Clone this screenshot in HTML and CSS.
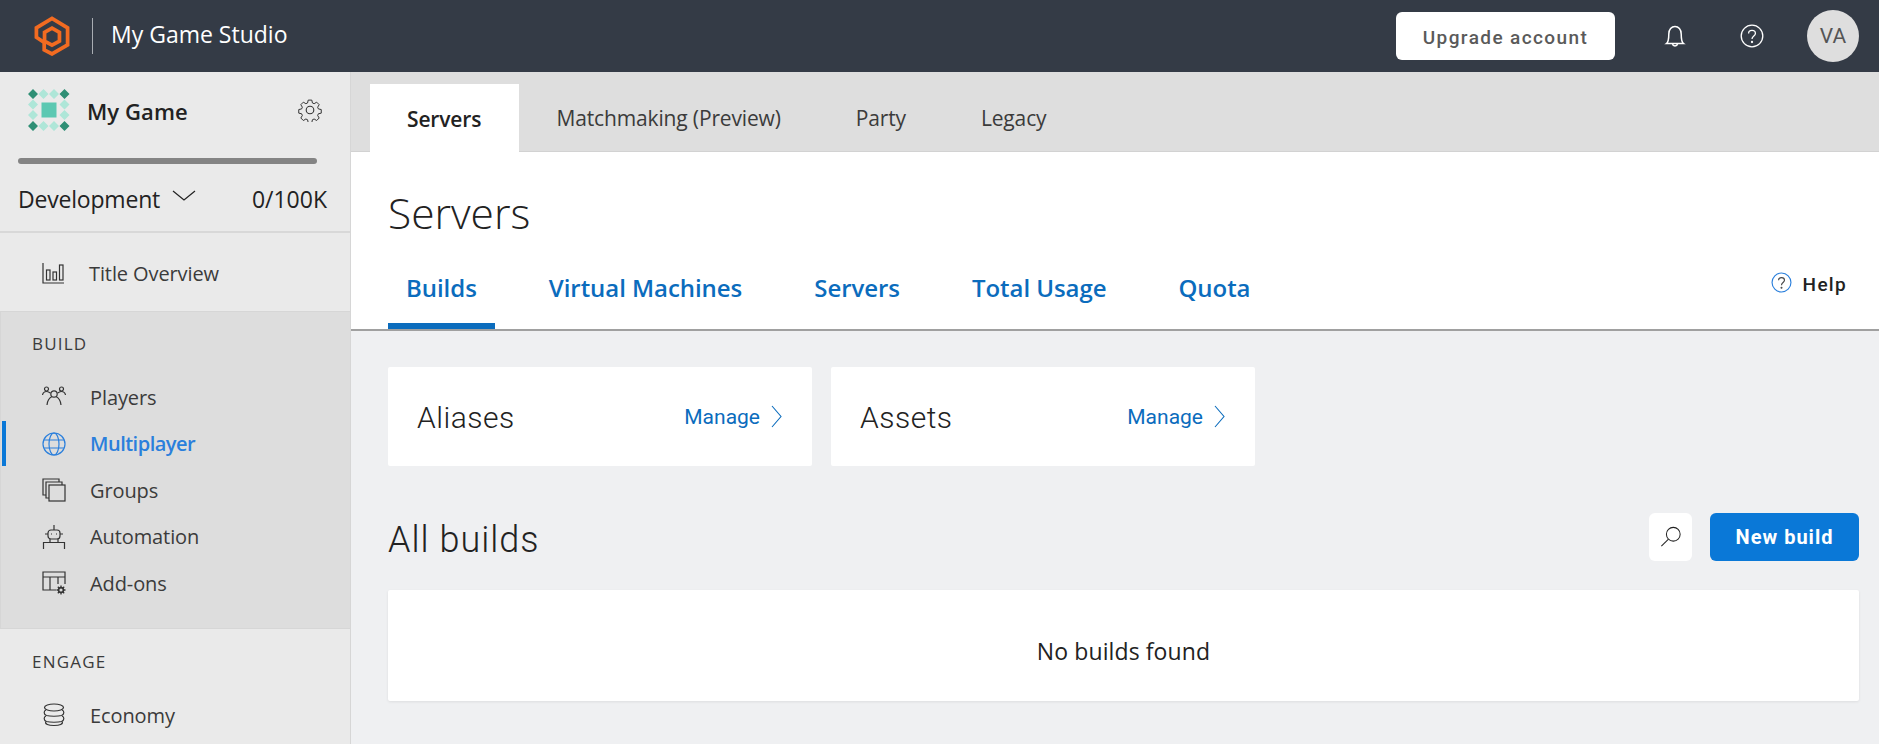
FILE: index.html
```html
<!DOCTYPE html>
<html lang="en">
<head>
    <meta charset="UTF-8">
    <meta name="viewport" content="width=device-width, initial-scale=1.0">
    <title>Servers</title>
    <link rel="stylesheet" href="styles.css">
</head>
<body>
    <header class="topbar">
        <svg class="logo" viewBox="73 50 106 118" fill="none" stroke="#f26b21" stroke-width="11" stroke-linejoin="miter">
            <path d="M103 150 L103 128 L80 113 L80 85 L126 57 L172 85 L172 135 L126 162 Z"/>
            <path d="M126 86 L148 98 L148 124 L126 136 L104 124 L104 98 Z"/>
        </svg>
        <span class="studio">My Game Studio</span>
        <div class="topbar-right">
            <button class="upgrade">Upgrade account</button>
            <svg class="top-icon bell" viewBox="0 0 24 24" fill="none" stroke="#fff" stroke-width="1.5">
                <path d="M3.5 19.5 C5.5 18 5.8 15.5 5.8 10 C5.8 5.5 8.5 2.5 12 2.5 C15.5 2.5 18.2 5.5 18.2 10 C18.2 15.5 18.5 18 20.5 19.5 Z"/>
                <path d="M9.5 20 C10 22.5 14 22.5 14.5 20"/>
            </svg>
            <svg class="top-icon help-top" viewBox="0 0 24 24" fill="none" stroke="#fff" stroke-width="1.3">
                <circle cx="12" cy="12" r="10.8"/>
                <path d="M8.6 9.4 C8.6 5.4 15.4 5.4 15.4 9.4 C15.4 12 12 12 12 15"/>
                <circle cx="12" cy="18" r="0.5"/>
            </svg>
            <div class="avatar">VA</div>
        </div>
    </header>

    <div class="layout">
        <aside class="sidebar">
            <div class="game">
                <svg class="game-icon" viewBox="0 0 42 42">
                    <path fill="#aee6d8" d="M15.5 0 l5 5 l-5 5 l-5 -5Z M26 0 l5 5 l-5 5 l-5 -5Z M5 10.5 l5 5 l-5 5 l-5 -5Z M5 21 l5 5 l-5 5 l-5 -5Z M36.5 10.5 l5 5 l-5 5 l-5 -5Z M36.5 21 l5 5 l-5 5 l-5 -5Z M15.5 32 l5 5 l-5 5 l-5 -5Z M26 32 l5 5 l-5 5 l-5 -5Z"/>
                    <path fill="#2f8f75" d="M5 0 l5 5 l-5 5 l-5 -5Z M36.5 0 l5 5 l-5 5 l-5 -5Z M5 32 l5 5 l-5 5 l-5 -5Z M36.5 32 l5 5 l-5 5 l-5 -5Z"/>
                    <rect fill="#5bc8b2" x="13.5" y="13.5" width="15" height="15"/>
                </svg>
                <span class="game-name">My Game</span>
                <svg class="gear" viewBox="0 0 24 24" fill="none" stroke="#333" stroke-width="1.1">
                    <circle cx="12" cy="12" r="3.8"/>
                    <path d="M10 1 h4 l.7 3.2 l1.9 .8 l2.8 -1.7 l2.8 2.8 l-1.7 2.8 l.8 1.9 l3.2 .7 v4 l-3.2 .7 l-.8 1.9 l1.7 2.8 l-2.8 2.8 l-2.8 -1.7 l-1.9 .8 l-.7 3.2 h-4 l-.7 -3.2 l-1.9 -.8 l-2.8 1.7 l-2.8 -2.8 l1.7 -2.8 l-.8 -1.9 l-3.2 -.7 v-4 l3.2 -.7 l.8 -1.9 l-1.7 -2.8 l2.8 -2.8 l2.8 1.7 l1.9 -.8Z" transform="translate(1.2 1.2) scale(.9)"/>
                </svg>
            </div>
            <div class="game-bar"></div>
            <div class="env">
                <span class="env-name">Development</span>
                <svg class="env-chevron" viewBox="0 0 24 11" fill="none" stroke="#222" stroke-width="1.2"><path d="M1 1 L12 10 L23 1"/></svg>
                <span class="env-count">0/100K</span>
            </div>

            <a class="nav-item overview">
                <svg class="nav-icon" viewBox="0 0 24 24" fill="none" stroke="#333" stroke-width="1.2">
                    <path d="M2 2 V22 H23"/>
                    <rect x="5.5" y="9" width="3.5" height="10"/>
                    <rect x="12" y="11" width="3.5" height="8"/>
                    <rect x="18.5" y="4" width="3.5" height="15"/>
                </svg>
                Title Overview
            </a>

            <section class="nav-group">
                <h2 class="nav-title">BUILD</h2>
                <a class="nav-item">
                    <svg class="nav-icon" viewBox="0 0 24 24" fill="none" stroke="#333" stroke-width="1.2">
                        <circle cx="12" cy="9" r="3.2"/>
                        <circle cx="4.5" cy="4" r="2"/>
                        <circle cx="19.5" cy="4" r="2"/>
                        <path d="M5 20 C5.5 14.5 8 12.5 10 11.5 M19 20 C18.5 14.5 16 12.5 14 11.5 M.5 10 C1 7.5 3 6.5 4.5 6.5 C6 6.5 7.5 7.5 8.5 8 M23.5 10 C23 7.5 21 6.5 19.5 6.5 C18 6.5 16.5 7.5 15.5 8"/>
                    </svg>
                    Players
                </a>
                <a class="nav-item active">
                    <svg class="nav-icon" viewBox="0 0 24 24" fill="none" stroke="#2a7fdc" stroke-width="1.2">
                        <circle cx="12" cy="12" r="11"/>
                        <ellipse cx="12" cy="12" rx="5" ry="11"/>
                        <path d="M2 8 H22 M2 16 H22"/>
                    </svg>
                    Multiplayer
                </a>
                <a class="nav-item">
                    <svg class="nav-icon" viewBox="0 0 24 24" fill="none" stroke="#333" stroke-width="1.2">
                        <path d="M4 17 H1 V1 H17 V4"/>
                        <path d="M7 20 H4 V4 H20 V7"/>
                        <rect x="7" y="7" width="16" height="16"/>
                    </svg>
                    Groups
                </a>
                <a class="nav-item">
                    <svg class="nav-icon" viewBox="0 0 24 24" fill="none" stroke="#333" stroke-width="1.2">
                        <path d="M12 0 V5"/>
                        <rect x="6" y="5" width="12" height="9" rx="3"/>
                        <path d="M3 9 H6 M18 9 H21 M1.5 24 V17.5 H22.5 V24 M8 14 V17.5 M16 14 V17.5"/>
                        <path d="M9 9 h1 M14 9 h1"/>
                    </svg>
                    Automation
                </a>
                <a class="nav-item">
                    <svg class="nav-icon" viewBox="0 0 24 24" fill="none" stroke="#333" stroke-width="1.2">
                        <path d="M14 19 H1 V1 H23 V13"/>
                        <path d="M1 6 H23 M8 6 V19 M16 6 V13"/>
                        <circle cx="19" cy="19" r="2.4" stroke-width="1.6"/>
                        <path d="M19 14.5 V16 M19 22 V23.5 M14.5 19 H16 M22 19 H23.5 M15.8 15.8 L17 17 M21 21 L22.2 22.2 M22.2 15.8 L21 17 M17 21 L15.8 22.2" stroke-width="1.3"/>
                    </svg>
                    Add-ons
                </a>
            </section>

            <section class="nav-group plain">
                <h2 class="nav-title">ENGAGE</h2>
                <a class="nav-item">
                    <svg class="nav-icon" viewBox="0 0 24 24" fill="none" stroke="#333" stroke-width="1.2">
                        <ellipse cx="12" cy="4.5" rx="9.5" ry="3.5"/>
                        <path d="M4 7 C1.5 8 1.5 11.5 4.5 12.5 C8 13.5 16 13.5 19.5 12.5 C22.5 11.5 22.5 8 20 7"/>
                        <path d="M4 13 C1.5 14 1.5 17.5 4.5 18.5 C8 19.5 16 19.5 19.5 18.5 C22.5 17.5 22.5 14 20 13"/>
                        <path d="M3.5 18.5 C3 21 6 22.5 12 22.5 C18 22.5 21 21 20.5 18.5"/>
                    </svg>
                    Economy
                </a>
            </section>
        </aside>

        <main class="main">
            <nav class="tabs">
                <a class="tab selected">Servers</a>
                <a class="tab">Matchmaking (Preview)</a>
                <a class="tab">Party</a>
                <a class="tab">Legacy</a>
            </nav>

            <div class="page-head">
                <h1 class="page-title">Servers</h1>
                <div class="subtabs">
                    <a class="subtab current">Builds</a>
                    <a class="subtab">Virtual Machines</a>
                    <a class="subtab">Servers</a>
                    <a class="subtab">Total Usage</a>
                    <a class="subtab">Quota</a>
                    <a class="help-link">
                        <svg class="help-icon" viewBox="0 0 24 24" fill="none" stroke="#2a7fdc" stroke-width="1.3">
                            <circle cx="12" cy="12" r="10.8"/>
                            <path d="M8.6 9.4 C8.6 5.4 15.4 5.4 15.4 9.4 C15.4 12 12 12 12 15" stroke="#444"/>
                            <circle cx="12" cy="18" r="0.5" stroke="#444"/>
                        </svg>
                        Help
                    </a>
                </div>
            </div>

            <div class="content">
                <div class="cards">
                    <div class="card">
                        <span class="card-name">Aliases</span>
                        <a class="manage">Manage
                            <svg class="manage-chevron" viewBox="0 0 11 23" fill="none" stroke="#0b6cbd" stroke-width="1.1"><path d="M1 1 L10 11.5 L1 22"/></svg>
                        </a>
                    </div>
                    <div class="card">
                        <span class="card-name">Assets</span>
                        <a class="manage">Manage
                            <svg class="manage-chevron" viewBox="0 0 11 23" fill="none" stroke="#0b6cbd" stroke-width="1.1"><path d="M1 1 L10 11.5 L1 22"/></svg>
                        </a>
                    </div>
                </div>

                <div class="builds-head">
                    <h2 class="builds-title">All builds</h2>
                    <button class="search-btn">
                        <svg viewBox="0 0 24 24" width="22" height="22" fill="none" stroke="#222" stroke-width="1.1">
                            <circle cx="14.5" cy="9" r="7.5"/>
                            <path d="M9 14.5 L1.5 22"/>
                        </svg>
                    </button>
                    <button class="new-build">New build</button>
                </div>

                <div class="empty">No builds found</div>
            </div>
        </main>
    </div>
</body>
</html>
```

FILE: styles.css
```css
* {
    box-sizing: border-box;
}

html, body {
    height: 744px;
    overflow: hidden;
}

body {
    margin: 0;
    font-family: "Open Sans", sans-serif;
    color: #222;
    background-color: #eff0f2;
}

h1, h2 {
    margin: 0;
    font-weight: normal;
}

button {
    border: none;
    cursor: pointer;
}

/* top bar */
.topbar {
    display: flex;
    align-items: center;
    height: 72px;
    padding-left: 34px;
    background-color: #343b46;
}

.logo {
    width: 36px;
    height: 40px;
}

.studio {
    height: 36px;
    margin-left: 22px;
    padding-left: 18px;
    border-left: 1px solid #a9adb3;
    color: #fff;
    font-size: 23px;
    line-height: 32px;
}

.topbar-right {
    display: flex;
    align-items: center;
    margin-left: auto;
    padding-right: 20px;
}

.upgrade {
    width: 219px;
    height: 48px;
    padding-top: 4px;
    background-color: #fff;
    border-radius: 6px;
    color: #5a5a5a;
    font-family: Roboto, sans-serif;
    font-size: 19px;
    font-weight: 500;
    letter-spacing: 1.4px;
}

.top-icon {
    width: 24px;
    height: 24px;
}

.bell {
    margin-left: 48px;
}

.help-top {
    margin-left: 53px;
}

.avatar {
    width: 52px;
    height: 52px;
    margin-left: 43px;
    border-radius: 50%;
    background-color: #dedede;
    color: #555;
    font-family: Roboto, sans-serif;
    font-size: 21px;
    line-height: 52px;
    text-align: center;
}

/* page layout */
.layout {
    display: flex;
    height: 672px;
}

.sidebar {
    flex: 0 0 351px;
    background-color: #eaeaea;
    border-right: 1px solid #d6d6d6;
}

.game {
    display: flex;
    align-items: center;
    height: 76px;
    padding: 0 28px 0 28px;
}

.game-icon {
    width: 42px;
    height: 42px;
}

.game-name {
    margin-left: 17px;
    padding-top: 2px;
    font-size: 22px;
    font-weight: 600;
    letter-spacing: 0.1px;
}

.gear {
    width: 24px;
    height: 24px;
    margin-left: auto;
}

.game-bar {
    width: 299px;
    height: 6px;
    margin: 10px 0 0 18px;
    border-radius: 3px;
    background-color: #848484;
}

.env {
    display: flex;
    align-items: center;
    height: 69px;
    padding: 2px 23px 0 18px;
    border-bottom: 2px solid #d8d8d8;
    font-size: 23px;
}

.env-name {
    letter-spacing: -0.2px;
}

.env-chevron {
    width: 24px;
    height: 11px;
    margin: 0 0 6px 12px;
}

.env-count {
    margin-left: auto;
}

.nav-item {
    display: flex;
    align-items: center;
    height: 46.5px;
    padding-left: 41px;
    color: #3b3b3b;
    font-size: 20px;
    letter-spacing: -0.1px;
}

.nav-icon {
    width: 24px;
    height: 24px;
    margin-right: 24px;
}

.overview {
    height: 78px;
    padding-top: 2px;
}

.nav-group {
    height: 318px;
    padding-top: 18px;
    background-color: #dddddd;
    border: 1px solid #d6d6d6;
    border-right: none;
}

.nav-group.plain {
    height: auto;
    padding: 19px 0 0 1px;
    background: none;
    border: none;
}

.nav-title {
    height: 44px;
    padding-left: 31px;
    color: #3b3b3b;
    font-size: 17px;
    line-height: 28px;
    letter-spacing: 1.2px;
}

.nav-item.active {
    position: relative;
    color: #2a7fdc;
    font-weight: 600;
    letter-spacing: -0.5px;
}

.nav-item.active::before {
    content: "";
    position: absolute;
    left: 1px;
    top: 0;
    width: 4px;
    height: 45px;
    background-color: #0a78d7;
}

/* main column */
.main {
    flex: 1;
    min-width: 0;
}

.tabs {
    display: flex;
    align-items: flex-end;
    height: 80px;
    padding-left: 19px;
    background-color: #dedede;
    border-bottom: 1px solid #d2d2d2;
}

.tab {
    height: 68px;
    padding: 0 37.5px;
    color: #3b3b3b;
    font-size: 21px;
    letter-spacing: -0.15px;
    line-height: 70px;
}

.tab.selected {
    width: 149px;
    margin-bottom: -1px;
    padding: 0 0 0 37px;
    background-color: #fff;
    color: #222;
    font-weight: 600;
}

.page-head {
    height: 179px;
    padding: 24px 20px 0 37px;
    background-color: #fff;
    border-bottom: 2px solid #a0a0a0;
}

.page-title {
    height: 84px;
    font-size: 42.5px;
    font-weight: 300;
    line-height: 74px;
}

.subtabs {
    display: flex;
    align-items: flex-start;
}

.subtab {
    height: 69px;
    padding: 0 18px;
    margin-right: 36px;
    color: #0b6cbd;
    font-size: 24px;
    font-weight: 600;
    letter-spacing: -0.05px;
    line-height: 56px;
}

.subtab.current {
    border-bottom: 6px solid #0b6cbd;
}

.help-link {
    display: flex;
    align-items: center;
    height: 48px;
    margin: 0 12px 0 auto;
    font-family: Roboto, sans-serif;
    font-size: 19px;
    font-weight: 500;
    letter-spacing: 1.3px;
}

.help-icon {
    width: 21px;
    height: 21px;
    margin: 0 11px 4px 0;
}

.content {
    padding: 36px 20px 0 37px;
}

.cards {
    display: flex;
    gap: 19px;
}

.card {
    display: flex;
    align-items: center;
    justify-content: space-between;
    width: 424px;
    height: 99px;
    padding: 0 30px 0 29px;
    background-color: #fff;
    border-radius: 2px;
}

.card-name {
    padding-top: 2px;
    font-family: Roboto, sans-serif;
    font-size: 30px;
    font-weight: 300;
    letter-spacing: 0.5px;
}

.manage {
    display: flex;
    align-items: center;
    gap: 11px;
    color: #0b6cbd;
    font-family: Roboto, sans-serif;
    font-size: 21px;
}

.manage-chevron {
    width: 11px;
    height: 23px;
}

.builds-head {
    display: flex;
    align-items: center;
    height: 48px;
    margin-top: 47px;
}

.builds-title {
    padding-top: 5px;
    font-family: Roboto, sans-serif;
    font-size: 36px;
    font-weight: 300;
    letter-spacing: 1px;
}

.search-btn {
    display: flex;
    align-items: center;
    justify-content: center;
    width: 43px;
    height: 48px;
    margin-left: auto;
    background-color: #fff;
    border-radius: 6px;
}

.new-build {
    width: 149px;
    height: 48px;
    margin-left: 18px;
    background-color: #0a78d7;
    border-radius: 6px;
    color: #fff;
    font-family: Roboto, sans-serif;
    font-size: 20px;
    font-weight: 700;
    letter-spacing: 1px;
}

.empty {
    height: 111px;
    margin-top: 29px;
    background-color: #fff;
    border-radius: 2px;
    box-shadow: 0 1px 3px rgba(0, 0, 0, 0.08);
    font-size: 23px;
    letter-spacing: 0.1px;
    line-height: 122px;
    text-align: center;
}
```
